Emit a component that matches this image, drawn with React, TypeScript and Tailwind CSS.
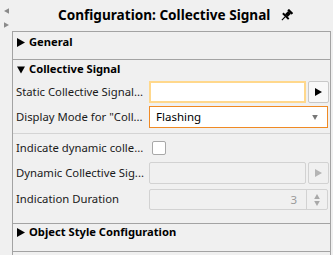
import React from "react";

function Tri({ dir, color = "#000", className = "" }: { dir: "right" | "down" | "left" | "up"; color?: string; className?: string }) {
  const pts = {
    right: "0,0 8,4.5 0,9",
    left: "8,0 0,4.5 8,9",
    down: "0,0 9,0 4.5,8",
    up: "0,8 9,8 4.5,0",
  }[dir];
  const box = dir === "right" || dir === "left" ? "0 0 8 9" : "0 0 9 8";
  return (
    <svg viewBox={box} className={className} fill={color}>
      <polygon points={pts} />
    </svg>
  );
}

function Pin() {
  return (
    <svg viewBox="0 0 12 12" className="w-[13px] h-[13px]">
      <g transform="rotate(45 6 6)" fill="#000">
        <rect x="3.2" y="0" width="5.6" height="2.2" rx="0.5" />
        <rect x="4.2" y="2" width="3.6" height="4.2" />
        <rect x="2.2" y="6" width="7.6" height="1.8" />
        <rect x="5.5" y="7.6" width="1" height="4.4" />
      </g>
    </svg>
  );
}

function SectionHeader({ open, title, h = "h-[20px]" }: { open: boolean; title: string; h?: string }) {
  return (
    <div className={"flex items-center pl-[4px] gap-[4px] " + h}>
      {open ? <Tri dir="down" className="w-[8px] h-[8px]" /> : <Tri dir="right" className="w-[8px] h-[9px]" />}
      <span className="font-bold text-[11.2px] text-black">{title}</span>
    </div>
  );
}

function Label({ children }: { children: React.ReactNode }) {
  return (
    <div className="w-[136px] shrink-0 pl-[3px] text-[11.3px] text-[#1a1a1a] whitespace-nowrap overflow-hidden">
      {children}
    </div>
  );
}

export default function App() {
  return (
    <div
      className="w-[333px] h-[255px] bg-[#f0f0f0] flex overflow-hidden"
      style={{ fontFamily: '"Noto Sans", "Open Sans", sans-serif' }}
    >
      {/* side collapse arrows */}
      <div className="w-[12px] shrink-0 flex flex-col items-center pt-[7px] gap-[6px]">
        <Tri dir="left" color="#8a8a8a" className="w-[5px] h-[8px]" />
        <Tri dir="right" color="#8a8a8a" className="w-[5px] h-[8px]" />
      </div>

      <div className="flex-1 flex flex-col min-w-0">
        <div className="h-[31px] flex items-center pl-[46px] gap-[10px]">
          <span className="font-bold text-[13.6px] text-black">Configuration: Collective Signal</span>
          <Pin />
        </div>

        <div className="flex-1 w-[319px] border-l border-r border-t border-[#a3a3a3] flex flex-col">
          {/* General */}
          <div className="h-[28px] border-b border-[#a3a3a3]">
            <SectionHeader open={false} title="General" h="h-[20px]" />
          </div>

          {/* Collective Signal */}
          <div className="border-b border-[#a3a3a3] pb-[13px]">
            <SectionHeader open title="Collective Signal" h="h-[19px]" />

            <div className="flex items-center h-[22px] mt-[2px]">
              <Label>Static Collective Signal...</Label>
              <div className="flex gap-[2px] h-full">
                <div className="w-[157px] h-full bg-white border-2 border-[#ffd88c]" />
                <button className="w-[21px] h-full border border-[#c8c8c8] rounded-[2px] bg-[#f8f8f8] flex items-center justify-center">
                  <Tri dir="right" className="w-[7px] h-[8px]" />
                </button>
              </div>
            </div>

            <div className="flex items-center h-[22px] mt-[3px]">
              <Label>Display Mode for "Coll...</Label>
              <div className="w-[179px] h-full bg-white border border-[#f08a24] flex items-center pl-[6px] pr-[8px]">
                <span className="flex-1 text-[11.5px] text-black">Flashing</span>
                <Tri dir="down" color="#777" className="w-[8px] h-[5px]" />
              </div>
            </div>

            <div className="h-px bg-[#d4d4d4] mt-[5px]" />

            <div className="flex items-center h-[20px] mt-[4px]">
              <Label>Indicate dynamic colle...</Label>
              <div className="ml-[3px] w-[14px] h-[14px] bg-white border border-[#a8a8a8] rounded-[2px]" />
            </div>

            <div className="flex items-center h-[22px] mt-[4px]">
              <Label>Dynamic Collective Sig...</Label>
              <div className="flex gap-[2px] h-full">
                <div className="w-[157px] h-full border border-[#d2d2d2] rounded-[2px]" />
                <div className="w-[21px] h-full border border-[#d2d2d2] rounded-[2px] flex items-center justify-center">
                  <Tri dir="right" color="#b4b4b4" className="w-[7px] h-[8px]" />
                </div>
              </div>
            </div>

            <div className="flex items-center h-[21px] mt-[5px]">
              <Label>Indication Duration</Label>
              <div className="w-[179px] h-full border border-[#d2d2d2] rounded-[2px] flex">
                <div className="flex-1 text-right pr-[9px] text-[11.5px] text-[#9a9a9a] leading-[19px]">3</div>
                <div className="w-[21px] border-l border-[#d2d2d2] flex flex-col items-center justify-center gap-[2px]">
                  <Tri dir="up" color="#a8a8a8" className="w-[8px] h-[5px]" />
                  <Tri dir="down" color="#a8a8a8" className="w-[8px] h-[5px]" />
                </div>
              </div>
            </div>
          </div>

          {/* Object Style */}
          <div className="h-[28px] border-b border-[#a3a3a3]">
            <SectionHeader open={false} title="Object Style Configuration" h="h-[17px]" />
          </div>
        </div>
      </div>
    </div>
  );
}
